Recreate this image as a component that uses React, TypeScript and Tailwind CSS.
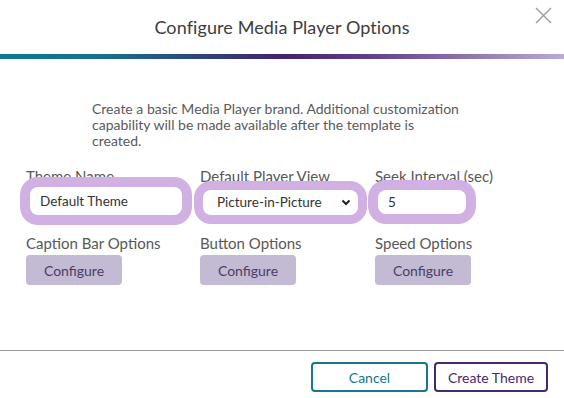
export default function App() {
  return (
    <div className="w-[564px] h-[398px] bg-white flex flex-col font-['Lato','Noto_Sans',sans-serif] text-[#585858]">
      {/* Header */}
      <div className="relative h-[54px] flex items-center justify-center">
        <h1 className="text-[18px] text-[#3d3d3d] tracking-[0.1px]">Configure Media Player Options</h1>
        <button className="absolute right-[11px] top-[6px] w-[19px] h-[19px]" aria-label="Close">
          <svg width="19" height="19" viewBox="0 0 19 19" fill="none">
            <path d="M2 2L17 17M17 2L2 17" stroke="#9a9a9a" strokeWidth="1.4" />
          </svg>
        </button>
      </div>
      <div className="h-[5px] bg-[linear-gradient(to_right,#0d7a8a_0%,#17708a_18%,#2e4478_36%,#43236e_50%,#5f3f88_65%,#8b73ab_82%,#b9aad6_100%)]" />

      {/* Body */}
      <div className="flex-1 pt-[42px]">
        <p className="ml-[92px] text-[14px] leading-[16px] text-[#5a5a5a]">
          Create a basic Media Player brand. Additional customization
          <br />
          capability will be made available after the template is
          <br />
          created.
        </p>

        <div className="mt-[19px] ml-[26px] grid grid-cols-[174px_175px_174px]">
          <div className="flex flex-col">
            <label className="text-[15px] leading-[17px]">Theme Name</label>
            <input
              defaultValue="Default Theme"
              className="mt-[2px] ml-[4px] w-[152px] h-[28px] rounded-[8px] bg-white px-[10px] text-[13.5px] text-[#333] outline-none shadow-[0_0_0_10px_#d1b0e3]"
            />
          </div>
          <div className="flex flex-col">
            <label className="text-[15px] leading-[17px]">Default Player View</label>
            <div className="relative mt-[5px] ml-[3px] w-[155px] h-[25px] rounded-[8px] bg-white shadow-[0_0_0_9px_#d1b0e3] flex items-center pl-[14px] text-[13.5px] text-[#333]">
              Picture-in-Picture
              <svg className="absolute right-[7px] top-[9px]" width="10" height="7" viewBox="0 0 10 7" fill="none">
                <path d="M1.5 1.5L5 5L8.5 1.5" stroke="#222" strokeWidth="2" />
              </svg>
            </div>
          </div>
          <div className="flex flex-col">
            <label className="text-[15px] leading-[17px]">Seek Interval (sec)</label>
            <input
              defaultValue="5"
              className="mt-[5px] ml-[3px] w-[88px] h-[24px] rounded-[8px] bg-white px-[10px] text-[13.5px] text-[#333] outline-none shadow-[0_0_0_10px_#d1b0e3]"
            />
          </div>

          {["Caption Bar Options", "Button Options", "Speed Options"].map((t) => (
            <div key={t} className="flex flex-col mt-[20px]">
              <span className="text-[15px] leading-[17px]">{t}</span>
              <button className="mt-[3px] w-[96px] h-[30px] rounded-[4px] bg-[#c3bad3] text-[14px] text-[#4a3c6c]">
                Configure
              </button>
            </div>
          ))}
        </div>
      </div>

      {/* Footer */}
      <div className="h-[48px] border-t border-[#9a9a9a] flex justify-end items-start pt-[11px] pr-[16px] gap-[6px]">
        <button className="w-[117px] h-[30px] rounded-[4px] border-2 border-[#17788a] text-[14px] text-[#17788a]">
          Cancel
        </button>
        <button className="w-[114px] h-[30px] rounded-[4px] border-2 border-[#47296f] text-[14px] text-[#47296f]">
          Create Theme
        </button>
      </div>
    </div>
  )
}
